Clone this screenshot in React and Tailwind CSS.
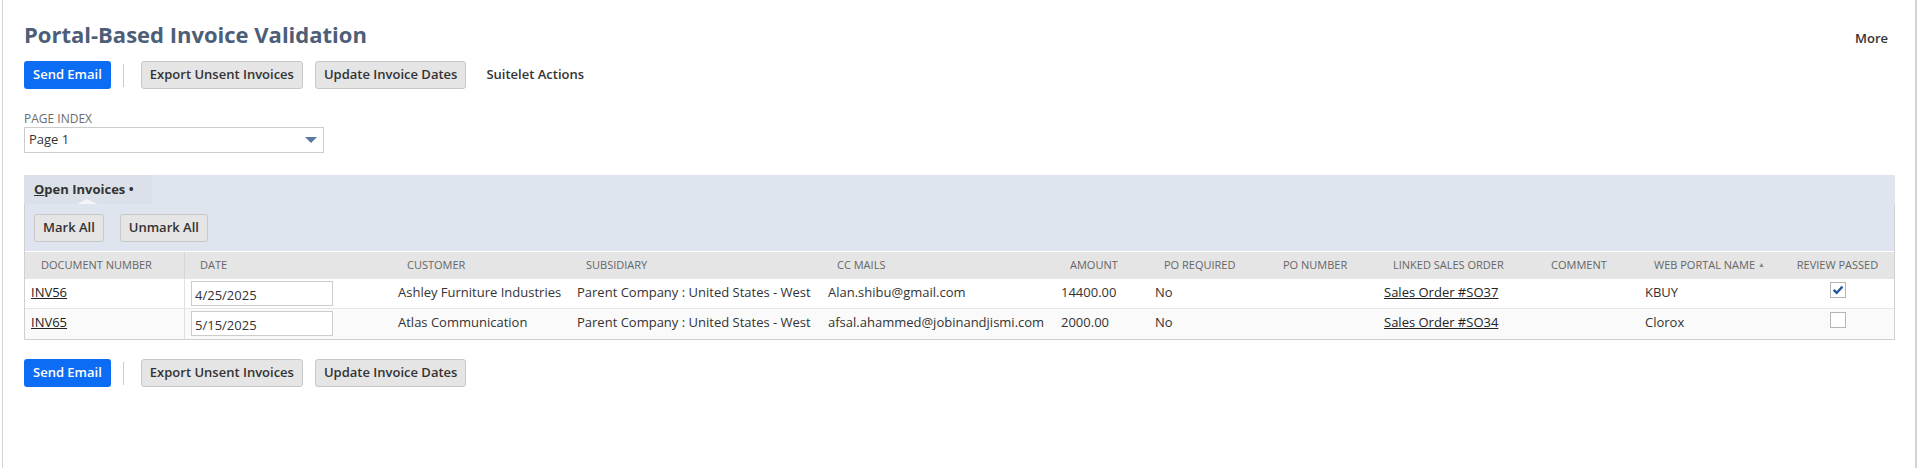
import React from 'react';

const cols = [
  { key: 'doc', label: 'Document Number' },
  { key: 'date', label: 'Date' },
  { key: 'customer', label: 'Customer' },
  { key: 'subsidiary', label: 'Subsidiary' },
  { key: 'cc', label: 'CC Mails' },
  { key: 'amount', label: 'Amount' },
  { key: 'poReq', label: 'PO Required' },
  { key: 'poNum', label: 'PO Number' },
  { key: 'so', label: 'Linked Sales Order' },
  { key: 'comment', label: 'Comment' },
  { key: 'portal', label: 'Web Portal Name' },
  { key: 'review', label: 'Review Passed' },
];

const invoices = [
  {
    doc: 'INV56',
    date: '4/25/2025',
    customer: 'Ashley Furniture Industries',
    subsidiary: 'Parent Company : United States - West',
    cc: 'Alan.shibu@gmail.com',
    amount: '14400.00',
    poReq: 'No',
    so: 'Sales Order #SO37',
    portal: 'KBUY',
    review: true,
  },
  {
    doc: 'INV65',
    date: '5/15/2025',
    customer: 'Atlas Communication',
    subsidiary: 'Parent Company : United States - West',
    cc: 'afsal.ahammed@jobinandjismi.com',
    amount: '2000.00',
    poReq: 'No',
    so: 'Sales Order #SO34',
    portal: 'Clorox',
    review: false,
  },
];

// grid track sizes for the sublist, all spelled out for tailwind
const gridCols =
  'grid grid-cols-[160px_207px_179px_251px_233px_94px_119px_110px_158px_103px_142px_113px]';

const GrayButton = ({ children }) => (
  <button className="h-[28px] rounded-[3px] border border-[#c8c8c8] bg-[#e5e5e5] px-[8px] text-[13px] font-semibold text-[#333]">
    {children}
  </button>
);

const ActionBar = ({ withSuitelet = false }) => (
  <div className="flex items-center">
    <button className="h-[28px] rounded-[3px] bg-[#0c6cf4] px-[9px] text-[13px] font-semibold text-white">
      Send Email
    </button>
    <div className="ml-[12px] mr-[17px] h-[23px] w-px bg-[#cccccc]"></div>
    <div className="flex items-center gap-[12px]">
      <GrayButton>Export Unsent Invoices</GrayButton>
      <GrayButton>Update Invoice Dates</GrayButton>
    </div>
    {withSuitelet && (
      <span className="ml-[20px] text-[13px] font-semibold text-[#333]">Suitelet Actions</span>
    )}
  </div>
);

const Checkbox = ({ checked }) => (
  <div className="mt-[3px] flex h-[16px] w-[16px] items-center justify-center border border-[#b5b5b5] bg-white">
    {checked && (
      <svg width="12" height="11" viewBox="0 0 12 11">
        <path d="M0.8 5.8 L2.6 4.1 L4.7 6.2 L9.6 0.8 L11.3 2.5 L4.7 9.6 Z" fill="#21559f" />
      </svg>
    )}
  </div>
);

const renderCell = (col, row) => {
  switch (col.key) {
    case 'doc':
      return <a className="text-[#222] underline">{row.doc}</a>;
    case 'date':
      return (
        <div className="mt-[2px] flex h-[25px] w-[142px] items-center border border-[#cccccc] bg-white pl-[3px] pt-[2px] text-[13px] text-[#333]">
          {row.date}
        </div>
      );
    case 'so':
      return <a className="text-[#222] underline">{row.so}</a>;
    case 'review':
      return <Checkbox checked={row.review} />;
    default:
      return <span>{row[col.key] || ''}</span>;
  }
};

export default function App() {
  return (
    <div className="h-[468px] bg-white pl-[2px] pr-[3px] font-['Open_Sans',sans-serif] text-[#333]">
      <div className="h-full border-l border-r-2 border-[#d4d4d4] pl-[21px] pr-5">
        {/* page title */}
        <div className="flex items-start justify-between pt-[19px]">
          <h1 className="text-[22px] font-bold leading-[30px] text-[#4d5e78]">
            Portal-Based Invoice Validation
          </h1>
          <span className="pr-[7px] pt-[10px] text-[13px] font-semibold leading-[18px] text-[#333]">More</span>
        </div>

        <div className="mt-[12px]">
          <ActionBar withSuitelet />
        </div>

        {/* page index select */}
        <div className="mt-[22px]">
          <div className="text-[12px] uppercase leading-[16px] text-[#6b6b6b]">Page Index</div>
          <div className="flex h-[26px] w-[300px] items-center justify-between border border-[#cccccc] pl-[4px] pr-[6px]">
            <span className="text-[13px] text-[#333]">Page 1</span>
            <svg width="12" height="6" viewBox="0 0 12 6">
              <path d="M0 0 H12 L6 6 Z" fill="#5b78a3" />
            </svg>
          </div>
        </div>

        {/* sublist */}
        <div className="mt-[22px]">
          <div className="flex h-[29px] bg-[#dfe5ee]">
            <div className="relative flex w-[128px] items-center bg-[#dce1e9] pl-[10px] text-[13px] font-bold text-[#333]">
              <span>
                <span className="underline">O</span>pen Invoices •
              </span>
              <span className="absolute bottom-0 left-[53px] h-0 w-0 border-x-[10px] border-b-[5px] border-x-transparent border-b-[#f3f5f8]"></span>
            </div>
          </div>

          <div className="border-x border-b border-[#d0d0d0]">
            <div className="flex gap-[16px] bg-[#dfe5ee] pb-[9px] pl-[9px] pt-[10px]">
              <GrayButton>Mark All</GrayButton>
              <GrayButton>Unmark All</GrayButton>
            </div>

            <div className={`${gridCols} h-[28px] border-t border-white bg-[#e5e5e5] text-[11px] uppercase text-[#666]`}>
              {cols.map((col, i) => (
                <div
                  key={col.key}
                  className={
                    col.key === 'review'
                      ? 'flex items-center justify-center'
                      : i === 0
                      ? 'flex items-center border-r border-[#d6d6d6] pl-[16px]'
                      : 'flex items-center pl-[15px]'
                  }
                >
                  {col.label}
                  {col.key === 'portal' && <span className="ml-[3px] text-[7px] text-[#888]">▲</span>}
                </div>
              ))}
            </div>

            {invoices.map((row, r) => (
              <div
                key={row.doc}
                className={`${gridCols} h-[30px] text-[13px] leading-[18px] text-[#333] ${
                  r === 0 ? 'border-b border-[#e6e6e6] bg-white' : 'bg-[#fafafa]'
                }`}
              >
                {cols.map((col, i) => (
                  <div
                    key={col.key}
                    className={
                      col.key === 'review'
                        ? 'flex justify-center'
                        : i === 0
                        ? 'border-r border-[#e0e0e0] pl-[6px] pt-[4px]'
                        : col.key === 'date'
                        ? 'pl-[6px]'
                        : 'whitespace-nowrap pl-[6px] pt-[4px]'
                    }
                  >
                    {renderCell(col, row)}
                  </div>
                ))}
              </div>
            ))}
          </div>
        </div>

        <div className="mt-[19px]">
          <ActionBar />
        </div>
      </div>
    </div>
  );
}
